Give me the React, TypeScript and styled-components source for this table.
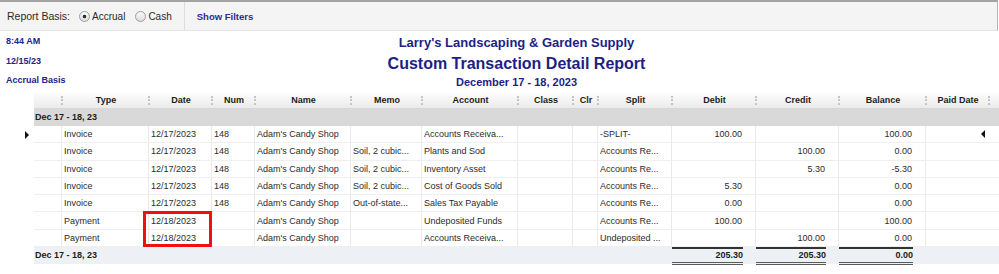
import styled, { createGlobalStyle } from "styled-components";

const COLUMNS =
  "28px 87px 63px 43px 96px 71px 96px 55px 25px 74px 84px 83px 87px 63px 1fr";

const headers = [
  "",
  "Type",
  "Date",
  "Num",
  "Name",
  "Memo",
  "Account",
  "Class",
  "Clr",
  "Split",
  "Debit",
  "Credit",
  "Balance",
  "Paid Date",
  "",
];

type Entry = {
  type: string;
  date: string;
  num: string;
  memo: string;
  account: string;
  split: string;
  debit: string;
  credit: string;
  balance: string;
  current?: boolean;
};

const entries: Entry[] = [
  { type: "Invoice", date: "12/17/2023", num: "148", memo: "", account: "Accounts Receiva...", split: "-SPLIT-", debit: "100.00", credit: "", balance: "100.00", current: true },
  { type: "Invoice", date: "12/17/2023", num: "148", memo: "Soil, 2 cubic...", account: "Plants and Sod", split: "Accounts Re...", debit: "", credit: "100.00", balance: "0.00" },
  { type: "Invoice", date: "12/17/2023", num: "148", memo: "Soil, 2 cubic...", account: "Inventory Asset", split: "Accounts Re...", debit: "", credit: "5.30", balance: "-5.30" },
  { type: "Invoice", date: "12/17/2023", num: "148", memo: "Soil, 2 cubic...", account: "Cost of Goods Sold", split: "Accounts Re...", debit: "5.30", credit: "", balance: "0.00" },
  { type: "Invoice", date: "12/17/2023", num: "148", memo: "Out-of-state...", account: "Sales Tax Payable", split: "Accounts Re...", debit: "0.00", credit: "", balance: "0.00" },
  { type: "Payment", date: "12/18/2023", num: "", memo: "", account: "Undeposited Funds", split: "Accounts Re...", debit: "100.00", credit: "", balance: "100.00" },
  { type: "Payment", date: "12/18/2023", num: "", memo: "", account: "Accounts Receiva...", split: "Undeposited ...", debit: "", credit: "100.00", balance: "0.00" },
];

export default function App() {
  return (
    <>
      <GlobalStyle />
      <Page>
        <TopBar>
          <BasisLabel>Report Basis:</BasisLabel>
          <RadioOption>
            <RadioCircle $checked />
            Accrual
          </RadioOption>
          <RadioOption>
            <RadioCircle />
            Cash
          </RadioOption>
          <BarDivider />
          <FilterLink>Show Filters</FilterLink>
        </TopBar>

        <ReportHead>
          <Meta>
            <MetaLine>8:44 AM</MetaLine>
            <MetaLine>12/15/23</MetaLine>
            <MetaLine>Accrual Basis</MetaLine>
          </Meta>
          <Titles>
            <Title $size={13} $height={20}>
              Larry's Landscaping &amp; Garden Supply
            </Title>
            <Title $size={16} $height={22}>
              Custom Transaction Detail Report
            </Title>
            <Title $size={11} $height={14}>
              December 17 - 18, 2023
            </Title>
          </Titles>
        </ReportHead>

        <Table>
          <Line>
            <Gutter />
            <HeaderCells>
              {headers.map((h, i) => (
                <HeadCell key={i}>
                  {i > 0 && <Separator />}
                  <HeadLabel>{h}</HeadLabel>
                </HeadCell>
              ))}
            </HeaderCells>
          </Line>

          <Line>
            <Gutter />
            <GroupBar>Dec 17 - 18, 23</GroupBar>
          </Line>

          {entries.map((e, i) => (
            <Line key={i}>
              <Gutter>{e.current && <RowMarker />}</Gutter>
              <DataCells>
                <Cell />
                <Cell>{e.type}</Cell>
                <Cell>{e.date}</Cell>
                <Cell>{e.num}</Cell>
                <Cell>Adam's Candy Shop</Cell>
                <Cell>{e.memo}</Cell>
                <Cell>{e.account}</Cell>
                <Cell />
                <Cell />
                <Cell>{e.split}</Cell>
                <Cell $right>{e.debit}</Cell>
                <Cell $right>{e.credit}</Cell>
                <Cell $right>{e.balance}</Cell>
                <Cell $right $open>
                  {e.current && <EndMarker />}
                </Cell>
                <Cell $open />
              </DataCells>
            </Line>
          ))}

          <Line>
            <Gutter />
            <TotalCells>
              <TotalLabel>Dec 17 - 18, 23</TotalLabel>
              <Amount>205.30</Amount>
              <Amount>205.30</Amount>
              <Amount>0.00</Amount>
            </TotalCells>
          </Line>

          <Highlight />
        </Table>
      </Page>
    </>
  );
}

const GlobalStyle = createGlobalStyle`
  html, body {
    margin: 0;
    padding: 0;
    background: #ffffff;
  }
  body {
    font-family: "Liberation Sans", Arial, sans-serif;
    color: #2b2b2b;
  }
`;

const Page = styled.div`
  width: 999px;
  height: 274px;
  overflow: hidden;
  background: #ffffff;
`;

const TopBar = styled.div`
  box-sizing: border-box;
  display: flex;
  align-items: center;
  width: 998px;
  height: 31px;
  padding-left: 7px;
  background: #f4f4f4;
  border-top: 2px solid #a3a3a3;
  border-right: 1px solid #b5b5b5;
  border-bottom: 1px solid #e4e4e4;
  font-size: 10px;
  color: #2a2a2a;
`;

const BasisLabel = styled.span`
  font-size: 10.5px;
  margin-right: 9px;
`;

const RadioOption = styled.label`
  display: flex;
  align-items: center;
  gap: 2px;
  margin-right: 10px;
  &:last-of-type {
    margin-right: 0;
  }
`;

const RadioCircle = styled.span<{ $checked?: boolean }>`
  box-sizing: border-box;
  width: 11px;
  height: 11px;
  border-radius: 50%;
  border: 1px solid #9d9d9d;
  background: ${(p) =>
    p.$checked
      ? "radial-gradient(circle, #333 0 1.5px, transparent 2.1px), linear-gradient(#fafafa, #dedede)"
      : "linear-gradient(#fafafa, #dedede)"};
`;

const BarDivider = styled.span`
  align-self: stretch;
  width: 1px;
  background: #dcdcdc;
  margin: 0 12px 0 12px;
`;

const FilterLink = styled.span`
  font-size: 9.5px;
  font-weight: bold;
  color: #2d2d96;
`;

const ReportHead = styled.div`
  display: grid;
  grid-template-columns: 34px 1fr;
  height: 61px;
`;

const Meta = styled.div`
  padding: 1px 0 0 6px;
  white-space: nowrap;
`;

const MetaLine = styled.div`
  font-size: 9px;
  font-weight: bold;
  line-height: 19.5px;
  color: #23238c;
`;

const Titles = styled.div`
  padding-top: 2px;
  text-align: center;
`;

const Title = styled.div<{ $size: number; $height: number }>`
  font-size: ${(p) => p.$size}px;
  line-height: ${(p) => p.$height}px;
  font-weight: bold;
  color: #1e1e86;
  white-space: nowrap;
`;

const Table = styled.div`
  position: relative;
  font-size: 9px;
`;

const Line = styled.div`
  display: flex;
`;

const Gutter = styled.div`
  box-sizing: border-box;
  flex: 0 0 34px;
  display: flex;
  align-items: center;
  justify-content: flex-end;
  padding-right: 5px;
`;

const HeaderCells = styled.div`
  flex: 1;
  display: grid;
  grid-template-columns: ${COLUMNS};
  height: 16px;
  background: linear-gradient(#fdfdfd, #ebebeb);
`;

const HeadCell = styled.div`
  display: flex;
  align-items: center;
  min-width: 0;
`;

const Separator = styled.span`
  width: 0;
  height: 9px;
  margin-left: -1px;
  border-left: 2px dotted #c4c4c4;
`;

const HeadLabel = styled.span`
  flex: 1;
  text-align: center;
  font-weight: bold;
  color: #1c1c1c;
  white-space: nowrap;
`;

const GroupBar = styled.div`
  flex: 1;
  height: 18px;
  line-height: 18px;
  padding-left: 1px;
  background: #d9d9d9;
  font-weight: bold;
  color: #1c1c1c;
`;

const DataCells = styled.div`
  box-sizing: border-box;
  flex: 1;
  display: grid;
  grid-template-columns: ${COLUMNS};
  height: 17.3px;
  border-bottom: 1px solid #efefef;
`;

const Cell = styled.div<{ $right?: boolean; $open?: boolean }>`
  box-sizing: border-box;
  display: flex;
  align-items: center;
  justify-content: ${(p) => (p.$right ? "flex-end" : "flex-start")};
  padding: ${(p) => (p.$right ? (p.$open ? "0 4px 0 0" : "0 13px 0 0") : "0 0 0 2px")};
  border-right: ${(p) => (p.$open ? "none" : "1px solid #e9e9e9")};
  white-space: nowrap;
  overflow: hidden;
  min-width: 0;
`;

const RowMarker = styled.span`
  width: 0;
  height: 0;
  border-top: 4.5px solid transparent;
  border-bottom: 4.5px solid transparent;
  border-left: 4px solid #111;
`;

const EndMarker = styled.span`
  width: 0;
  height: 0;
  border-top: 4.5px solid transparent;
  border-bottom: 4.5px solid transparent;
  border-right: 4px solid #111;
`;

const TotalCells = styled.div`
  flex: 1;
  display: grid;
  grid-template-columns: ${COLUMNS};
  height: 17px;
  background: #edf1f5;
  font-weight: bold;
  color: #1c1c1c;
`;

const TotalLabel = styled.div`
  grid-column: 1 / 11;
  padding-left: 1px;
  line-height: 17px;
`;

const Amount = styled.div`
  box-sizing: border-box;
  height: 18px;
  margin-right: 13px;
  text-align: right;
  line-height: 13px;
  border-top: 2px solid #333;
  border-bottom: 3px double #5a5a5a;
`;

const Highlight = styled.div`
  position: absolute;
  box-sizing: border-box;
  left: 143px;
  top: 119px;
  width: 69px;
  height: 36px;
  border: 3px solid #ee1111;
  pointer-events: none;
`;
